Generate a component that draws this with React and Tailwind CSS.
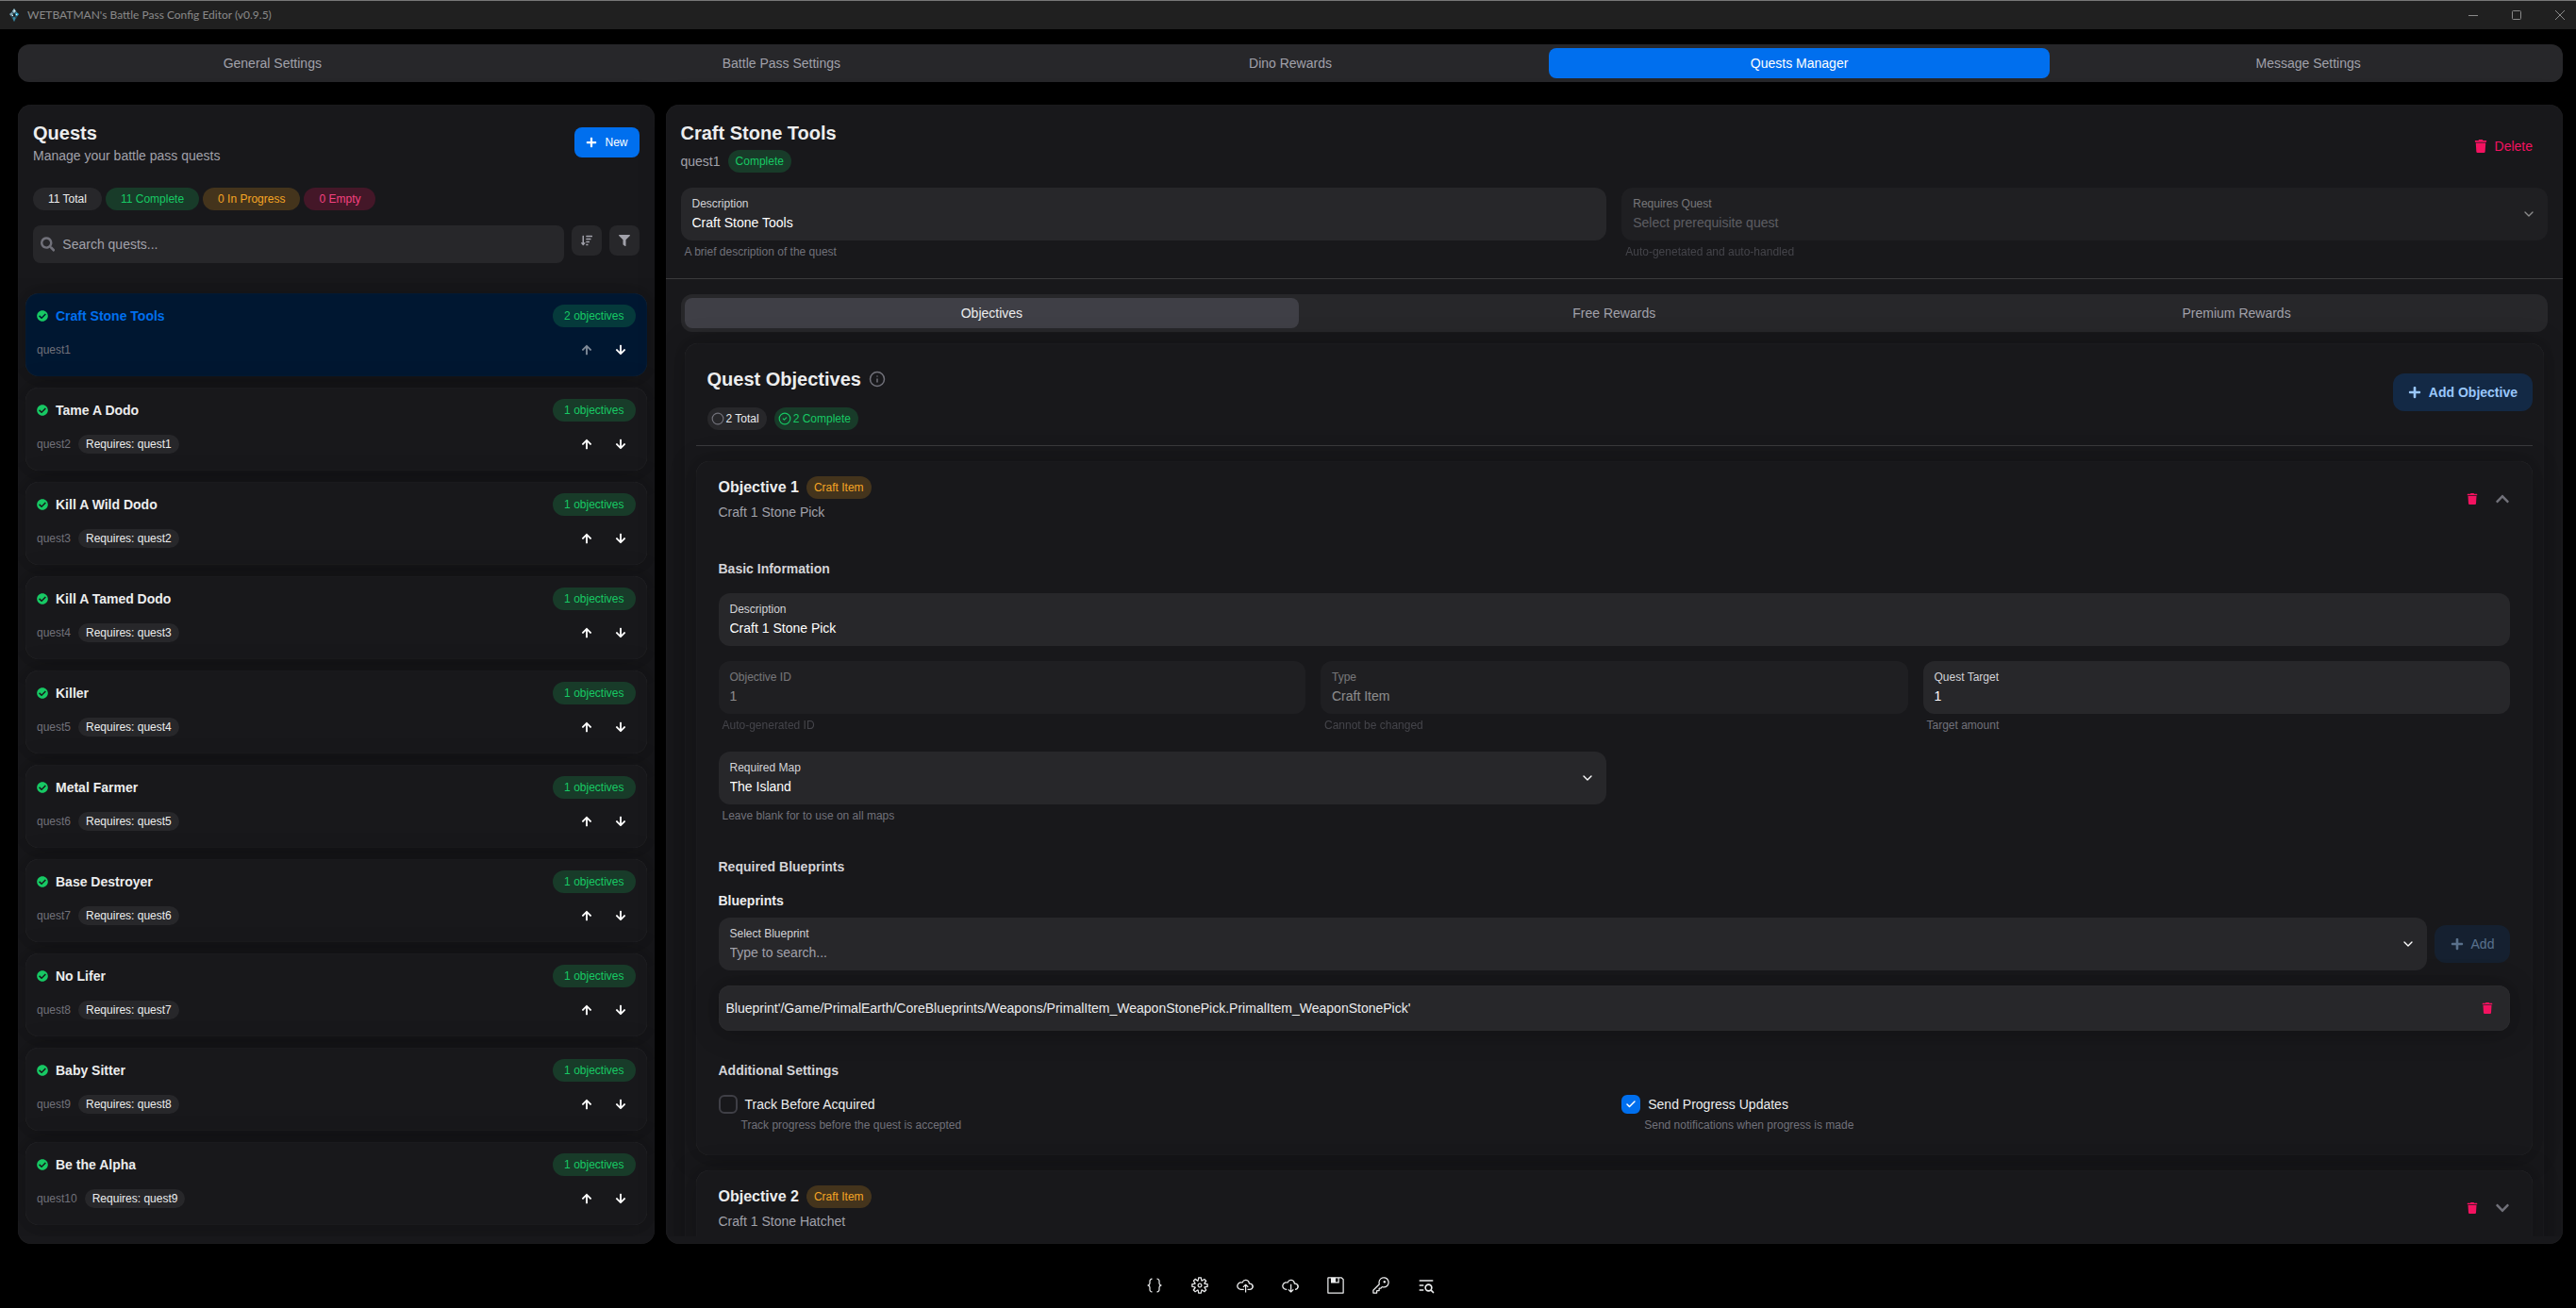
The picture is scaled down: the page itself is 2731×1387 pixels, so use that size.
import React, { useState } from "react";
import {
  FaArrowDown,
  FaArrowUp,
  FaCheckCircle,
  FaChevronDown,
  FaChevronUp,
  FaFilter,
  FaPlus,
  FaSearch,
  FaSortAmountDown,
  FaTrash,
} from "react-icons/fa";
import {
  VscCloudDownload,
  VscCloudUpload,
  VscGear,
  VscJson,
  VscKey,
  VscSave,
} from "react-icons/vsc";
import { TbListSearch } from "react-icons/tb";
import { Check, ChevronDown, Circle, CircleCheck, Info } from "lucide-react";

const mainTabs = [
  "General Settings",
  "Battle Pass Settings",
  "Dino Rewards",
  "Quests Manager",
  "Message Settings",
];

const questTabs = ["Objectives", "Free Rewards", "Premium Rewards"];

const quests = [
  { id: "quest1", name: "Craft Stone Tools", objectives: 2 },
  { id: "quest2", name: "Tame A Dodo", objectives: 1, requires: "quest1" },
  { id: "quest3", name: "Kill A Wild Dodo", objectives: 1, requires: "quest2" },
  { id: "quest4", name: "Kill A Tamed Dodo", objectives: 1, requires: "quest3" },
  { id: "quest5", name: "Killer", objectives: 1, requires: "quest4" },
  { id: "quest6", name: "Metal Farmer", objectives: 1, requires: "quest5" },
  { id: "quest7", name: "Base Destroyer", objectives: 1, requires: "quest6" },
  { id: "quest8", name: "No Lifer", objectives: 1, requires: "quest7" },
  { id: "quest9", name: "Baby Sitter", objectives: 1, requires: "quest8" },
  { id: "quest10", name: "Be the Alpha", objectives: 1, requires: "quest9" },
];

const footerActions = [
  { label: "View JSON", icon: VscJson },
  { label: "Settings", icon: VscGear },
  { label: "Upload", icon: VscCloudUpload },
  { label: "Download", icon: VscCloudDownload },
  { label: "Save", icon: VscSave },
  { label: "Key", icon: VscKey },
  { label: "Search", icon: TbListSearch },
];

const cardShadow =
  "shadow-[0_0_15px_0_rgb(0_0_0/0.06),0_2px_30px_0_rgb(0_0_0/0.22),inset_0_0_1px_0_rgb(255_255_255/0.15)]";

const chipColors = {
  default: "bg-[#27272a] text-[#ecedee]",
  success: "bg-[#17c964]/20 text-[#17c964]",
  warning: "bg-[#f5a524]/20 text-[#f5a524]",
  danger: "bg-[#f31260]/20 text-[#f54180]",
};

function Chip({ color = "default", className = "px-2", children }) {
  return (
    <span
      className={`inline-flex h-6 items-center rounded-full text-xs whitespace-nowrap ${chipColors[color]} ${className}`}
    >
      {children}
    </span>
  );
}

function Logo() {
  return (
    <svg className="h-4 w-3" viewBox="0 0 12 16" aria-hidden="true">
      <path d="M6 1 11 7 6 15 1 7z" fill="#2b4a57" />
      <path d="M6 1 8 4 6 6 4 4z" fill="#9fc4d0" />
      <path d="M1 7 4 5 5 8 3 9z" fill="#7fa3b0" />
      <path d="M11 7 8 5 7 8 9 9z" fill="#38b5dc" />
      <path d="M6 6 7.5 8 6 10 4.5 8z" fill="#1d1d1d" />
      <path d="M6 10 7.5 11 6 15 4.5 11z" fill="#3c8ea8" />
      <path d="M6 3h1v1H6zM8 7h1v1H8zM4 8h1v1H4z" fill="#e8f8ff" />
    </svg>
  );
}

function TitleBar() {
  return (
    <header className="flex h-[31px] shrink-0 items-center border-t border-[#777777] bg-[#202020] pl-[9px] text-[#8a8a8a]">
      <Logo />
      <span className="ml-2 font-[Lato,sans-serif] text-xs">
        WETBATMAN's Battle Pass Config Editor (v0.9.5)
      </span>
      <div className="ml-auto flex gap-3">
        <button type="button" aria-label="Minimize" className="flex h-7 w-[34px] items-center justify-center">
          <svg className="size-[10px]" viewBox="0 0 10 10" stroke="currentColor">
            <path d="M0 5.5h10" />
          </svg>
        </button>
        <button type="button" aria-label="Maximize" className="flex h-7 w-[34px] items-center justify-center">
          <svg className="size-[10px]" viewBox="0 0 10 10" fill="none" stroke="currentColor">
            <rect x="0.5" y="0.5" width="9" height="9" rx="1" />
          </svg>
        </button>
        <button type="button" aria-label="Close" className="flex h-7 w-[34px] items-center justify-center">
          <svg className="size-[10px]" viewBox="0 0 10 10" stroke="currentColor">
            <path d="M0 0l10 10M10 0 0 10" />
          </svg>
        </button>
      </div>
    </header>
  );
}

function Tabs({ items, active, onChange, activeClass }) {
  return (
    <div role="tablist" className="flex h-10 shrink-0 gap-2 rounded-xl bg-[#27272a] p-1">
      {items.map((item) => (
        <button
          key={item}
          type="button"
          role="tab"
          aria-selected={item === active}
          onClick={() => onChange(item)}
          className={`flex-1 basis-0 rounded-lg text-sm ${item === active ? activeClass : "text-[#a1a1aa]"}`}
        >
          {item}
        </button>
      ))}
    </div>
  );
}

// Text box, drop-down or searchable field with its label inside the box
function Field({ label, helper, value, placeholder, options, chevron, disabled, className = "" }) {
  const control = "h-5 w-full appearance-none bg-transparent text-sm outline-none placeholder:text-[#a1a1aa]";

  return (
    <div className={`${disabled ? "opacity-50" : ""} ${className}`}>
      <label className="flex h-14 items-center rounded-xl bg-[#27272a] px-3">
        <span className="flex flex-1 flex-col gap-0.5">
          <span className="text-xs leading-4 text-[#d4d4d8]">{label}</span>
          {options ? (
            <select
              disabled={disabled}
              defaultValue={options[0]}
              className={`${control} ${value ? "text-white" : "text-[#a1a1aa]"}`}
            >
              {options.map((option) => (
                <option key={option}>{option}</option>
              ))}
            </select>
          ) : (
            <input
              type="text"
              disabled={disabled}
              defaultValue={value}
              placeholder={placeholder}
              className={`${control} text-white`}
            />
          )}
        </span>
        {chevron && <ChevronDown className="size-4 text-white" />}
      </label>
      {helper && <p className="p-1 text-xs leading-4 text-[#71717a]">{helper}</p>}
    </div>
  );
}

function QuestCard({ quest, selected, first, onSelect }) {
  return (
    <li
      onClick={onSelect}
      className={`flex h-[88px] shrink-0 cursor-pointer flex-col gap-2 rounded-[14px] p-3 ${cardShadow} ${
        selected ? "bg-[#001731]" : "bg-[#18181b]"
      }`}
    >
      <div className="flex h-6 items-center gap-2">
        <FaCheckCircle className="size-3 text-[#17c964]" />
        <h3 className={`text-sm font-bold ${selected ? "text-[#006fee]" : "text-[#ecedee]"}`}>{quest.name}</h3>
        <Chip color="success" className="ml-auto px-3">
          {quest.objectives} objectives
        </Chip>
      </div>
      <div className="flex h-8 items-center">
        <span className="text-xs text-[#71717a]">{quest.id}</span>
        {quest.requires && (
          <span className="ml-2 flex h-5 items-center rounded-full bg-[#27272a] px-2 text-xs text-[#ecedee]">
            Requires: {quest.requires}
          </span>
        )}
        <div className="ml-auto flex gap-1 text-white">
          <button
            type="button"
            aria-label="Move up"
            disabled={first}
            className="flex size-8 items-center justify-center disabled:opacity-50"
          >
            <FaArrowUp className="size-3" />
          </button>
          <button type="button" aria-label="Move down" className="flex size-8 items-center justify-center">
            <FaArrowDown className="size-3" />
          </button>
        </div>
      </div>
    </li>
  );
}

function QuestList({ selectedId, onSelect }) {
  return (
    <aside className={`flex w-1/4 shrink-0 flex-col overflow-hidden rounded-[14px] bg-[#18181b] pb-2 ${cardShadow}`}>
      <div className="flex flex-col gap-4 p-4">
        <div className="flex items-center justify-between">
          <div>
            <h1 className="text-xl leading-7 font-bold text-[#ecedee]">Quests</h1>
            <p className="text-sm text-[#a1a1aa]">Manage your battle pass quests</p>
          </div>
          <button
            type="button"
            className="flex h-8 items-center gap-2 rounded-lg bg-[#006fee] px-3 text-xs font-medium text-white"
          >
            <FaPlus className="size-3" />
            New
          </button>
        </div>
        <div className="mt-2 flex gap-1">
          <Chip className="px-4">11 Total</Chip>
          <Chip color="success" className="px-4">11 Complete</Chip>
          <Chip color="warning" className="px-4">0 In Progress</Chip>
          <Chip color="danger" className="px-4">0 Empty</Chip>
        </div>
        <div className="flex items-start gap-2">
          <label className="flex h-10 flex-1 items-center gap-2 rounded-lg bg-[#27272a] px-2">
            <FaSearch className="size-4 text-[#71717a]" />
            <input
              type="text"
              aria-label="Search quests"
              placeholder="Search quests..."
              className="w-full bg-transparent text-sm text-white outline-none placeholder:text-[#a1a1aa]"
            />
          </label>
          <button
            type="button"
            aria-label="Sort"
            className="flex size-8 items-center justify-center rounded-lg bg-[#27272a] text-[#a1a1aa]"
          >
            <FaSortAmountDown className="size-3" />
          </button>
          <button
            type="button"
            aria-label="Filter"
            className="flex size-8 items-center justify-center rounded-lg bg-[#27272a] text-[#a1a1aa]"
          >
            <FaFilter className="size-3" />
          </button>
        </div>
      </div>
      <ul className="flex min-h-0 flex-1 flex-col gap-3 overflow-hidden px-2 pt-4">
        {quests.map((quest, index) => (
          <QuestCard
            key={quest.id}
            quest={quest}
            first={index === 0}
            selected={quest.id === selectedId}
            onSelect={() => onSelect(quest.id)}
          />
        ))}
      </ul>
    </aside>
  );
}

function SettingCheckbox({ label, helper, defaultChecked = false }) {
  const [checked, setChecked] = useState(defaultChecked);

  return (
    <div>
      <label className="flex h-5 items-center gap-2 text-sm text-[#ecedee]">
        <span className="grid size-5 place-items-center">
          <input
            type="checkbox"
            checked={checked}
            onChange={(e) => setChecked(e.target.checked)}
            className="col-start-1 row-start-1 size-5 appearance-none rounded-md border-2 border-[#3f3f46] checked:border-[#006fee] checked:bg-[#006fee]"
          />
          {checked && (
            <Check className="pointer-events-none col-start-1 row-start-1 size-3 text-white" strokeWidth={3} />
          )}
        </span>
        {label}
      </label>
      <p className="mt-1 pl-6 text-xs leading-4 text-[#71717a]">{helper}</p>
    </div>
  );
}

function ObjectiveCard({ number, description, open, children }) {
  return (
    <section className={`rounded-[14px] bg-[#18181b] px-6 pt-4 pb-6 ${cardShadow}`}>
      <div className="flex items-center justify-between">
        <div className="flex flex-col gap-1">
          <div className="flex items-center gap-2">
            <h3 className="text-base leading-6 font-bold text-[#ecedee]">Objective {number}</h3>
            <Chip color="warning">Craft Item</Chip>
          </div>
          <p className="text-sm text-[#a1a1aa]">{description}</p>
        </div>
        <div className="flex items-center gap-2">
          <button
            type="button"
            aria-label="Delete objective"
            className="flex size-8 items-center justify-center text-[#f31260]"
          >
            <FaTrash className="size-3" />
          </button>
          <button type="button" aria-label={open ? "Collapse" : "Expand"} className="text-[#71717a]">
            {open ? <FaChevronUp className="size-4" /> : <FaChevronDown className="size-4" />}
          </button>
        </div>
      </div>
      {open && <div className="mt-10 flex flex-col gap-8">{children}</div>}
    </section>
  );
}

function Section({ title, children }) {
  return (
    <div>
      <h4 className="mb-4 text-sm font-bold text-[#d4d4d8]">{title}</h4>
      {children}
    </div>
  );
}

function QuestDetail() {
  const [tab, setTab] = useState("Objectives");

  return (
    <main className={`flex min-w-0 flex-1 flex-col overflow-hidden rounded-[14px] bg-[#18181b] pb-2 ${cardShadow}`}>
      <div className="flex flex-col gap-4 border-b border-white/15 p-4">
        <div className="flex items-center justify-between">
          <div className="flex flex-col gap-1">
            <h2 className="text-xl leading-7 font-bold text-[#ecedee]">Craft Stone Tools</h2>
            <div className="flex items-center gap-2">
              <span className="text-sm text-[#a1a1aa]">quest1</span>
              <Chip color="success">Complete</Chip>
            </div>
          </div>
          <button type="button" className="flex h-10 items-center gap-2 px-4 text-sm text-[#f31260]">
            <FaTrash className="size-[14px]" />
            Delete
          </button>
        </div>
        <div className="grid grid-cols-2 gap-4">
          <Field label="Description" value="Craft Stone Tools" helper="A brief description of the quest" />
          <Field
            label="Requires Quest"
            options={["Select prerequisite quest"]}
            helper="Auto-genetated and auto-handled"
            chevron
            disabled
          />
        </div>
      </div>

      <div className="flex min-h-0 flex-1 flex-col overflow-hidden px-4 pt-4">
        <Tabs items={questTabs} active={tab} onChange={setTab} activeClass="bg-[#3f3f46] text-[#ecedee]" />

        <div className="px-1 pt-3">
          <div className={`rounded-[14px] bg-[#18181b] p-3 ${cardShadow}`}>
            <div className="flex items-center justify-between border-b border-white/15 pb-4">
              <div className="pt-3 pl-3">
                <div className="flex items-center gap-2">
                  <h2 className="text-xl leading-7 font-bold text-[#ecedee]">Quest Objectives</h2>
                  <Info className="size-[18px] text-[#71717a]" strokeWidth={2} />
                </div>
                <div className="mt-4 flex gap-2">
                  <Chip className="gap-0.5 pr-2 pl-1">
                    <Circle className="size-[14px] text-[#71717a]" strokeWidth={2} />2 Total
                  </Chip>
                  <Chip color="success" className="gap-0.5 pr-2 pl-1">
                    <CircleCheck className="size-[14px]" strokeWidth={2} />2 Complete
                  </Chip>
                </div>
              </div>
              <button
                type="button"
                className="flex h-10 items-center gap-2 rounded-xl bg-[#006fee]/20 px-4 text-sm font-bold text-[#99c7fb]"
              >
                <FaPlus className="size-[14px]" />
                Add Objective
              </button>
            </div>

            <div className="flex flex-col gap-4 pt-4">
              <ObjectiveCard number={1} description="Craft 1 Stone Pick" open>
                <Section title="Basic Information">
                  <div className="flex flex-col gap-4">
                    <Field label="Description" value="Craft 1 Stone Pick" />
                    <div className="grid grid-cols-3 gap-4">
                      <Field label="Objective ID" value="1" helper="Auto-generated ID" disabled />
                      <Field label="Type" value="Craft Item" helper="Cannot be changed" disabled />
                      <Field label="Quest Target" value="1" helper="Target amount" />
                    </div>
                    <div className="grid grid-cols-2 gap-4">
                      <Field
                        label="Required Map"
                        value="The Island"
                        options={["The Island"]}
                        helper="Leave blank for to use on all maps"
                        chevron
                      />
                    </div>
                  </div>
                </Section>

                <Section title="Required Blueprints">
                  <h5 className="mb-2 text-sm font-bold text-[#ecedee]">Blueprints</h5>
                  <div className="flex items-center gap-2">
                    <Field label="Select Blueprint" placeholder="Type to search..." chevron className="flex-1" />
                    <button
                      type="button"
                      disabled
                      className="flex h-10 w-20 items-center justify-center gap-2 rounded-xl bg-[#006fee]/20 text-sm text-[#99c7fb] opacity-50"
                    >
                      <FaPlus className="size-[14px]" />
                      Add
                    </button>
                  </div>
                  <div className={`mt-4 flex h-12 items-center justify-between rounded-xl bg-[#27272a] px-2 ${cardShadow}`}>
                    <span className="text-sm text-[#ecedee]">
                      Blueprint'/Game/PrimalEarth/CoreBlueprints/Weapons/PrimalItem_WeaponStonePick.PrimalItem_WeaponStonePick'
                    </span>
                    <button
                      type="button"
                      aria-label="Remove blueprint"
                      className="flex size-8 items-center justify-center text-[#f31260]"
                    >
                      <FaTrash className="size-3" />
                    </button>
                  </div>
                </Section>

                <Section title="Additional Settings">
                  <div className="grid grid-cols-2 gap-4">
                    <SettingCheckbox
                      label="Track Before Acquired"
                      helper="Track progress before the quest is accepted"
                    />
                    <SettingCheckbox
                      label="Send Progress Updates"
                      helper="Send notifications when progress is made"
                      defaultChecked
                    />
                  </div>
                </Section>
              </ObjectiveCard>

              <ObjectiveCard number={2} description="Craft 1 Stone Hatchet" />
            </div>
          </div>
        </div>
      </div>
    </main>
  );
}

function App() {
  const [mainTab, setMainTab] = useState("Quests Manager");
  const [selectedId, setSelectedId] = useState("quest1");

  return (
    <div className="flex h-screen flex-col overflow-hidden bg-black font-['Liberation_Sans',Arial,sans-serif]">
      <TitleBar />
      <div className="flex min-h-0 flex-1 flex-col pt-4 pr-[14px] pl-[19px]">
        <Tabs items={mainTabs} active={mainTab} onChange={setMainTab} activeClass="bg-[#006fee] text-white" />
        <div className="mt-6 flex min-h-0 flex-1 gap-3">
          <QuestList selectedId={selectedId} onSelect={setSelectedId} />
          <QuestDetail />
        </div>
        <footer className="mt-6 flex justify-center gap-2 pb-1 text-[#ecedee]">
          {footerActions.map(({ label, icon: Icon }) => (
            <button key={label} type="button" aria-label={label} className="flex size-10 items-center justify-center">
              <Icon className="size-5" />
            </button>
          ))}
        </footer>
      </div>
    </div>
  );
}

export default App;
